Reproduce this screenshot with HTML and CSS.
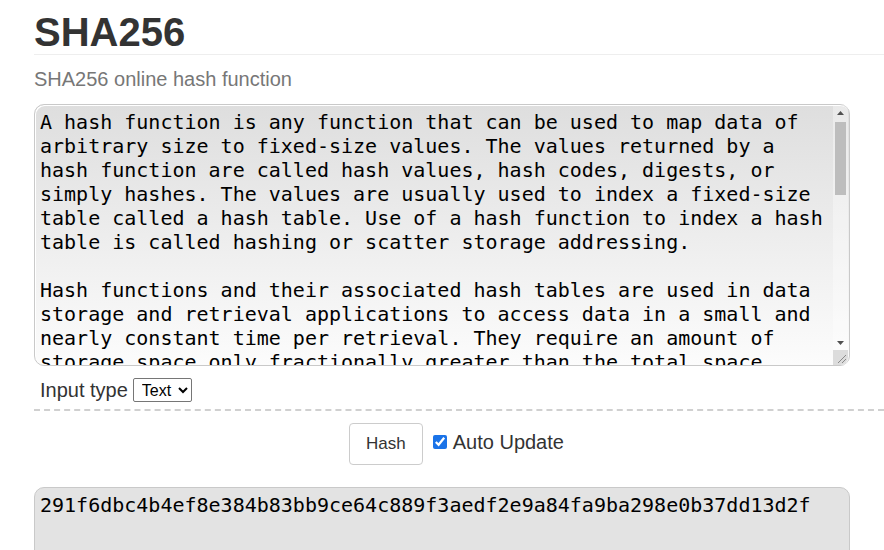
FILE: index.html
```html
<!DOCTYPE html>
<html lang="en">
<head>
<meta charset="utf-8">
<title>SHA256</title>
<link rel="stylesheet" href="styles.css">
</head>
<body>
<main class="page">
  <h1 class="title">SHA256</h1>
  <p class="subtitle">SHA256 online hash function</p>
  <div class="input-wrap">
    <textarea class="input-area" spellcheck="false">A hash function is any function that can be used to map data of arbitrary size to fixed-size values. The values returned by a hash function are called hash values, hash codes, digests, or simply hashes. The values are usually used to index a fixed-size table called a hash table. Use of a hash function to index a hash table is called hashing or scatter storage addressing.

Hash functions and their associated hash tables are used in data storage and retrieval applications to access data in a small and nearly constant time per retrieval. They require an amount of storage space only fractionally greater than the total space required for the data or records themselves. Hashing is a computationally and storage space-efficient form of data access that avoids the non-constant access time of ordered and unordered lists and structured trees, and the often exponential storage requirements of direct access of state spaces of large or variable-length keys.

Use of hash functions relies on statistical properties of key and function interaction: worst-case behaviour is intolerably bad but rare, and average-case behaviour can be nearly optimal (minimal collision).

Hash functions are related to (and often confused with) checksums, check digits, fingerprints, lossy compression, randomization functions, error-correcting codes, and ciphers. Although the concepts overlap to some extent, each one has its own uses and requirements and is designed and optimized differently. The hash function differs from these concepts mainly in terms of data integrity.</textarea>
    <div class="scrollbar" aria-hidden="true">
      <div class="sb-btn">
        <svg width="7" height="4" viewBox="0 0 7 4"><path d="M0 4 L3.5 0 L7 4 Z" fill="#505050"/></svg>
      </div>
      <div class="sb-track"><div class="sb-thumb"></div></div>
      <div class="sb-btn">
        <svg width="7" height="4" viewBox="0 0 7 4"><path d="M0 0 L7 0 L3.5 4 Z" fill="#505050"/></svg>
      </div>
      <div class="sb-corner">
        <svg width="15" height="15" viewBox="0 0 15 15"><path d="M13 5 L5 13 M13 9 L9 13" stroke="#8a8a8a" stroke-width="1"/></svg>
      </div>
    </div>
  </div>
  <div class="type-row">
    <label class="type-label" for="type">Input type</label>
    <select id="type" class="type-select">
      <option>Text</option>
      <option>Hex</option>
    </select>
  </div>
  <div class="action-row">
    <button class="hash-btn" type="button">Hash</button>
    <label class="auto-label"><input type="checkbox" class="auto-check" checked>Auto Update</label>
  </div>
  <textarea class="output-area" readonly>291f6dbc4b4ef8e384b83bb9ce64c889f3aedf2e9a84fa9ba298e0b37dd13d2f</textarea>
</main>
</body>
</html>
```
FILE: styles.css
```css
html, body {
  margin: 0;
  padding: 0;
  background: #fff;
}

body {
  font-family: "Liberation Sans", Arial, sans-serif;
  color: #333;
  overflow: hidden;
}

.page {
  padding-left: 34px;
}

.title {
  margin: 0;
  padding-top: 10px;
  font-size: 40px;
  line-height: 44px;
  font-weight: bold;
  color: #333;
  border-bottom: 1px solid #eee;
}

.subtitle {
  margin: 12px 0 0;
  font-size: 20px;
  line-height: 24px;
  color: #777;
}

.input-area,
.output-area {
  display: block;
  box-sizing: border-box;
  width: 816px;
  font-family: "DejaVu Sans Mono", monospace;
  font-size: 20px;
  line-height: 24px;
  color: #000;
  padding: 5px;
  border: 1px solid #c9c9c9;
  border-radius: 10px;
  outline: none;
}

.input-wrap {
  position: relative;
  width: 816px;
  margin-top: 13px;
}

.input-area {
  height: 262px;
  padding-right: 20px;
  background: linear-gradient(#dedede, #fcfcfc);
  box-shadow: inset 1px 1px 0 #fff;
  overflow: hidden;
  resize: none;
}

.scrollbar {
  position: absolute;
  top: 1px;
  right: 2px;
  bottom: 1px;
  width: 15px;
  display: flex;
  flex-direction: column;
  background: rgba(255, 255, 255, 0.35);
}

.sb-btn {
  height: 15px;
  display: flex;
  align-items: center;
  justify-content: center;
}

.sb-track {
  flex: 1;
  padding: 2px 2px 0;
}

.sb-thumb {
  height: 73px;
  background: #bdbdbd;
}

.sb-corner {
  height: 15px;
  background: #dcdcdc;
  border-bottom-right-radius: 8px;
}

.sb-corner svg {
  display: block;
}

.type-row {
  display: flex;
  align-items: center;
  gap: 5px;
  padding: 12px 0 7px 6px;
  border-bottom: 2px dashed #d0d0d0;
}

.type-label {
  font-size: 20px;
  line-height: 24px;
  color: #333;
}

.type-select {
  font-family: "Liberation Sans", Arial, sans-serif;
  font-size: 16px;
  height: 24px;
  color: #000;
  background: #fff;
  border: 1px solid #767676;
  border-radius: 2px;
  padding: 0 3px 0 4px;
}

.action-row {
  display: flex;
  justify-content: center;
  align-items: center;
  gap: 10px;
  margin-top: 12px;
  padding-right: 5px;
}

.hash-btn {
  font-family: "Liberation Sans", Arial, sans-serif;
  font-size: 17px;
  color: #333;
  background: #fff;
  border: 1px solid #ccc;
  border-radius: 4px;
  height: 42px;
  padding: 0 16px;
}

.auto-label {
  display: flex;
  align-items: center;
  font-size: 20px;
  color: #333;
  margin-top: -4px;
}

.auto-check {
  width: 14px;
  height: 14px;
  margin: 0 6px 0 0;
  accent-color: #1a73e8;
}

.output-area {
  margin-top: 22px;
  height: 120px;
  background: #e3e3e3;
  resize: none;
  overflow: hidden;
}
```
